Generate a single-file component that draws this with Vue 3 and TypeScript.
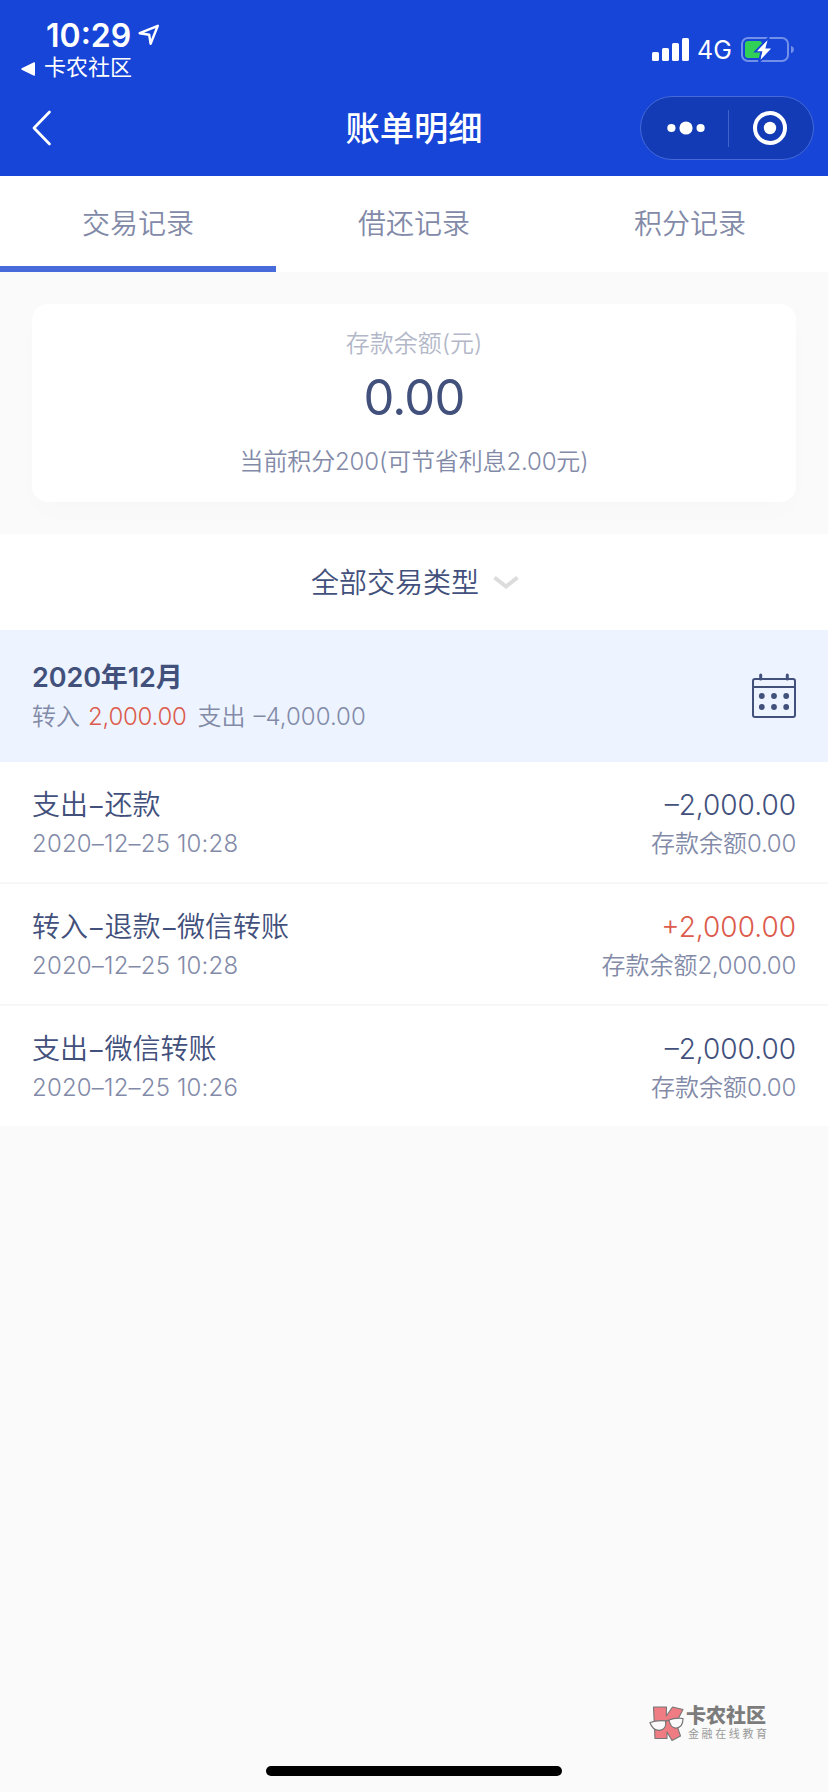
<script setup lang="ts">
interface BillRecord {
  title: string[]
  time: string
  amount: string
  balance: string
  income: boolean
}

const tabs: string[] = ['交易记录', '借还记录', '积分记录']
const activeTab = 0

const records: BillRecord[] = [
  { title: ['支出', '还款'], time: '2020–12–25 10:28', amount: '–2,000.00', balance: '0.00', income: false },
  { title: ['转入', '退款', '微信转账'], time: '2020–12–25 10:28', amount: '+2,000.00', balance: '2,000.00', income: true },
  { title: ['支出', '微信转账'], time: '2020–12–25 10:26', amount: '–2,000.00', balance: '0.00', income: false },
]

const dotXs: number[] = [9.8, 22, 34.2]
const dotYs: number[] = [23, 34]
</script>

<template>
  <div class="page">
    <header class="header">
      <div class="status">
        <div class="status-left">
          <div class="clock-row">
            <span class="clock">10:29</span>
            <svg class="location" width="22" height="22" viewBox="0 0 22 22">
              <path d="M1.7 9.2 L19.8 1.8 L12.6 19.8 L11.2 10.8 Z" fill="none" stroke="#fff" stroke-width="2.4" stroke-linejoin="round" />
            </svg>
          </div>
          <div class="return-row">
            <svg width="15" height="14" viewBox="0 0 15 14"><path d="M1 7 L13.3 1 V13 Z" fill="#fff" stroke="#fff" stroke-width="1.4" stroke-linejoin="round" /></svg>
            <span>卡农社区</span>
          </div>
        </div>
        <div class="status-right">
          <svg width="38" height="24" viewBox="0 0 38 24" fill="#fff">
            <rect x="0" y="14" width="7" height="9" rx="1.6" />
            <rect x="10" y="10" width="7" height="13" rx="1.6" />
            <rect x="20" y="5" width="7" height="18" rx="1.6" />
            <rect x="30" y="0" width="7" height="23" rx="1.6" />
          </svg>
          <span class="network">4G</span>
          <svg class="battery" width="54" height="26" viewBox="0 0 54 26">
            <rect x="1" y="1" width="46" height="23" rx="6" fill="none" stroke="#7390e9" stroke-width="2" />
            <path d="M50 8.7 Q53 10 53 12.5 Q53 15 50 16.3 Z" fill="#7390e9" />
            <rect x="4" y="4" width="17" height="17" rx="3" fill="#31d158" />
            <path d="M27.4 1 L14.500 14.500 H20.500 L18 25 L32 11 H25 Z" fill="#fff" stroke="#1645d8" stroke-width="2" />
            <path d="M26.6 3.2 L16 14.2 H21.6 L19.500 22.8 L30 11.5 H24.3 Z" fill="#fff" />
          </svg>
        </div>
      </div>
      <nav class="nav">
        <svg class="back" width="22" height="38" viewBox="0 0 22 38"><path d="M18.5 3 L3 19 L18.5 35" fill="none" stroke="#fff" stroke-width="2.7" stroke-linecap="round" stroke-linejoin="round" /></svg>
        <h1>账单明细</h1>
        <div class="capsule">
          <svg width="38" height="16" viewBox="0 0 38 16" fill="#fff"><circle cx="4.4" cy="8" r="4.1" /><circle cx="19" cy="8" r="6.6" /><circle cx="33.6" cy="8" r="4.1" /></svg>
          <i class="divider"></i>
          <svg width="36" height="36" viewBox="0 0 36 36"><circle cx="18" cy="18" r="15" fill="none" stroke="#fff" stroke-width="4" /><circle cx="18" cy="18" r="6.2" fill="#fff" /></svg>
        </div>
      </nav>
    </header>

    <div class="tabs">
      <div v-for="(tab, i) in tabs" :key="tab" class="tab" :class="{ active: i === activeTab }">{{ tab }}</div>
    </div>

    <section class="summary">
      <div class="card">
        <div class="card-label">存款余额(元)</div>
        <div class="card-value">0.00</div>
        <div class="card-points">当前积分200(可节省利息2.00元)</div>
      </div>
    </section>

    <div class="filter">
      <span>全部交易类型</span>
      <svg width="26" height="16" viewBox="0 0 26 16"><path d="M1.5 2.5 L13 11.5 L24.5 2.5" fill="none" stroke="#dcdcdc" stroke-width="4" /></svg>
    </div>

    <section class="month">
      <div class="month-text">
        <div class="month-title">2020年12月</div>
        <div class="month-sub">
          <span>转入</span><span class="num red in-total">2,000.00</span><span>支出</span><span class="out-total">–4,000.00</span>
        </div>
      </div>
      <svg width="44" height="46" viewBox="0 0 44 46">
        <g fill="none" stroke="#42507c" stroke-width="2">
          <rect x="1" y="6" width="42" height="38" rx="2" />
          <path d="M1 14 H43" />
          <path d="M8.7 2 V6 M35.3 2 V6" stroke-width="3" stroke-linecap="round" />
        </g>
        <g fill="#42507c">
          <template v-for="y in dotYs" :key="y">
            <circle v-for="x in dotXs" :key="x" :cx="x" :cy="y" r="2.9" />
          </template>
        </g>
      </svg>
    </section>

    <ul class="records">
      <li v-for="(r, i) in records" :key="i">
        <div class="col">
          <div class="line-main"><template v-for="(part, p) in r.title" :key="p"><span v-if="p > 0" class="dash">–</span>{{ part }}</template></div>
          <div class="line-sub time">{{ r.time }}</div>
        </div>
        <div class="col right">
          <div class="line-main amount" :class="{ red: r.income }">{{ r.amount }}</div>
          <div class="line-sub">存款余额<span class="num">{{ r.balance }}</span></div>
        </div>
      </li>
    </ul>

    <footer class="footer">
      <div class="brand">
        <svg width="36" height="37" viewBox="0 0 36 37">
          <path d="M4.5 2 H17.500 L17.300 11 L23.500 2 L34 4.500 L27 18 L31.500 31 L23 35.500 L18 27 V33.500 H6 Z" fill="#ee7c82" stroke="#777" stroke-width="1.100" stroke-linejoin="round" />
          <path d="M1 17.500 Q8 15 16.500 15.800 Q18 24.500 10.500 25.300 Q3.500 25.500 1 17.500 Z M20 15 Q26 12.500 34 13.500 Q34 22 27.500 23 Q21.500 23.500 20 15 Z" fill="#fafafa" stroke="#777" stroke-width="1.200" />
          <path d="M16.500 17 Q18 14.500 20 16" fill="none" stroke="#777" stroke-width="1.200" />
        </svg>
        <div>
          <div class="brand-name">卡农社区</div>
          <div class="brand-sub">金融在线教育</div>
        </div>
      </div>
      <div class="home-bar"></div>
    </footer>
  </div>
</template>

<style>
html, body { margin: 0; background: #fafafa; }
</style>

<style scoped>
.page {
  width: 828px;
  height: 1792px;
  display: flex;
  flex-direction: column;
  background: #fafafa;
  color: #42507c;
  font-family: Inter, "Noto Sans CJK SC", sans-serif;
  overflow: hidden;
  box-sizing: border-box;
}
.header { height: 176px; background: #1645d8; color: #fff; }
.status { height: 80px; display: flex; justify-content: space-between; }
.status-left { padding: 18px 0 0 21px; }
.clock-row { display: flex; height: 34px; padding-left: 25px; }
.clock { font-size: 32px; line-height: 36px; font-weight: 600; width: 92px; white-space: nowrap; }
.location { margin-top: 6px; }
.return-row { display: flex; align-items: center; gap: 8px; height: 30px; font-size: 22px; line-height: 28px; font-weight: 400; }
.return-row svg { margin-top: 3px; }
.status-right { display: flex; align-items: flex-start; padding: 38px 33px 0 0; }
.network { font-size: 25px; line-height: 25px; margin: 0 8px 0 7px; width: 36px; }
.battery { margin-top: -1px; }
.nav { height: 96px; display: grid; grid-template-columns: 1fr 200px 1fr; align-items: center; }
.back { margin-left: 31px; }
h1 { margin: 0; text-align: center; font-size: 34.3px; line-height: 96px; height: 94px; font-weight: 500; }
.capsule {
  justify-self: end;
  margin-right: 14px;
  width: 174px;
  height: 64px;
  box-sizing: border-box;
  border: 1px solid #4569d8;
  border-radius: 32px;
  background: #123bb5;
  display: flex;
  align-items: center;
  justify-content: space-between;
  padding: 0 25px 0 26px;
}
.divider { width: 1px; height: 37px; background: #4163cc; }

.tabs { height: 96px; display: flex; background: #fff; }
.tab { flex: 1; box-sizing: border-box; height: 96px; text-align: center; font-size: 28px; line-height: 97px; color: #828aa8; font-weight: 350; border-bottom: 6px solid transparent; }
.tab.active { border-color: #486bdc; }

.summary { height: 262px; box-sizing: border-box; padding: 32px; }
.card { height: 198px; border-radius: 16px; background: #fff; text-align: center; box-shadow: 0 12px 32px rgba(0, 0, 0, .012); display: flex; flex-direction: column; font-weight: 350; }
.card-label { font-size: 24px; line-height: 36px; padding-top: 22px; color: #b3b8c9; }
.card-value { font-size: 49px; line-height: 60px; margin-top: 6px; letter-spacing: -.8px; font-weight: 400; }
.card-points { font-size: 24px; line-height: 36px; margin-top: 16px; color: #828aa8; letter-spacing: -.15px; }

.filter { height: 96px; box-sizing: border-box; padding: 0 0 3px 2px; background: #fff; display: flex; align-items: center; justify-content: center; gap: 14px; font-size: 28px; font-weight: 350; }
.filter svg { margin-top: 4px; }

.month { height: 132px; background: #edf4ff; box-sizing: border-box; padding: 0 32px; display: flex; align-items: center; justify-content: space-between; }
.month-text { padding-top: 2px; }
.month-title { font-size: 27px; font-weight: 600; line-height: 40px; letter-spacing: -.1px; }
.month-sub { font-size: 24px; line-height: 38px; color: #828aa8; font-weight: 350; display: flex; }
.num { letter-spacing: -.25px; }
.in-total { margin: 0 11px 0 8px; }
.out-total { margin-left: 8px; }
.red { color: #dc5b4c; }

.records { list-style: none; margin: 0; padding: 0; background: #fff; font-weight: 350; }
.records li { height: 117px; padding: 3px 32px 0; display: flex; justify-content: space-between; align-items: center; border-bottom: 2px solid #f6f7f8; }
.records li:last-child { border-bottom: 0; }
.line-main { font-size: 28px; line-height: 42px; height: 41px; white-space: nowrap; }
.line-sub { font-size: 24px; line-height: 38px; height: 38px; color: #828aa8; white-space: nowrap; }
.dash { display: inline-block; width: 16.5px; height: 30px; line-height: 30px; text-align: center; transform: scaleX(.97); font-family: Inter, sans-serif; font-size: 26px; font-weight: 400; }
.time { letter-spacing: .18px; }
.right { text-align: right; }

.footer { flex: 1; display: flex; flex-direction: column; justify-content: flex-end; align-items: center; padding-bottom: 16px; }
.brand { align-self: flex-end; display: flex; gap: 1px; margin: 0 60px 24px 0; color: #7c7c7c; }
.brand-name { font-size: 20px; line-height: 22px; font-weight: 900; }
.brand-sub { font-size: 11px; line-height: 14px; letter-spacing: 2.6px; padding-left: 2px; color: #999; width: 80px; white-space: nowrap; }
.home-bar { width: 296px; height: 10px; border-radius: 5px; background: #000; }
</style>
